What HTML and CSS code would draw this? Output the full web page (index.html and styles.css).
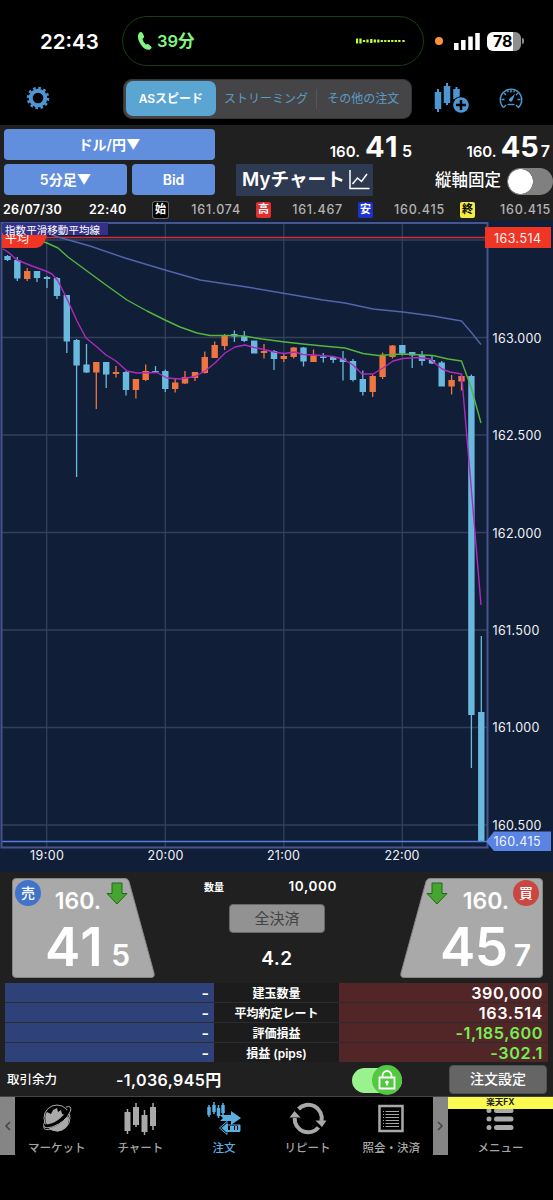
FILE: index.html
```
<!DOCTYPE html>
<html lang="ja">
    <head>
        <meta charset="utf-8">
        <meta name="viewport" content="width=device-width, initial-scale=1.0">
        <title>ドル/円 注文</title>
        <link rel="stylesheet" href="styles.css">
    </head>
    <body>
        <!-- phone status bar -->
        <div class="status-bar">
            <span class="clock">22:43</span>
            <div class="call-pill">
                <svg class="phone" width="16" height="20" viewBox="0 0 16 20"><path d="M2 2Q4 0 5.500 2L7 5Q7.500 6.500 5.500 8Q6 11 9 13.500Q10.500 12.500 12 13.500L14.500 16Q15 17.500 13 18.500Q9 20 4.500 14.500Q-1 7 2 2Z"/></svg>
                <span class="call-time">39分</span>
                <svg class="wave" width="50" height="6" viewBox="0 0 50 6"><path d="M1 .5v5M4.500 .5v5"/><path d="M8 2v2M11.500 1.500v3M15.300 1v4M18.800 1.500v3M22.300 1.500v3M25.800 2v2M29.300 2v2M32.800 2v2M36.300 2v2M39.800 2v2M43.300 2v2M47.500 2v2"/></svg>
            </div>
            <span class="mic-dot"></span>
            <svg class="signal" width="27" height="17" viewBox="0 0 27 17"><path d="M2.300 17v-7M9.300 17v-10M16.500 17v-13.500M23.500 17v-17"/></svg>
            <div class="battery">78</div>
            <span class="battery-tip"></span>
        </div>

        <!-- order mode tabs -->
        <div class="nav">
            <svg class="gear" width="24" height="24" viewBox="-12 -12 24 24">
                <circle r="7.300" class="gear-ring"/>
                <circle r="10" class="gear-teeth"/>
            </svg>
            <div class="segments">
                <span class="segment active">ASスピード</span>
                <span class="segment">ストリーミング</span>
                <span class="segment last">その他の注文</span>
            </div>
            <svg class="add-chart" width="36" height="32" viewBox="0 0 36 32">
                <path class="wick" d="M4 6v23M13 0v22M22.500 4v10"/>
                <path class="candle" d="M4 9v17M13 3v17M22.500 6v10"/>
                <circle class="halo" cx="27" cy="22" r="8.800"/>
                <circle class="disc" cx="27" cy="22" r="7.800"/>
                <path class="plus" d="M27 17v10M22 22h10"/>
            </svg>
            <svg class="gauge" width="26" height="24" viewBox="0 0 26 24">
                <path d="M5.500 21.500A10.700 10.700 0 1 1 20.500 21.500L18 19M5.500 21.500L8 19"/>
                <path d="M13 3.500v3M6 7l2 2M20 7l-2 2M3.500 13.500h3M22.500 13.500h-3M9.500 4.500l.7 1.700M16.500 4.500l-.7 1.700"/>
                <path d="M9.500 18.500h7"/>
                <path class="needle" d="M17 8l-2.500 6.500a1.800 1.800 0 1 1-2.600-2.200z"/>
            </svg>
        </div>

        <!-- currency pair, bar length and rates -->
        <div class="toolbar">
            <div class="selectors">
                <button class="pair">ドル/円▼</button>
                <button class="term">5分足▼</button>
                <button class="side">Bid</button>
            </div>
            <div class="rates">
                <div class="rate-row">
                    <span class="rate bid">160.<b>41</b><i>5</i></span>
                    <span class="rate ask">160.<b>45</b><i>7</i></span>
                </div>
                <div class="option-row">
                    <div class="my-chart">Myチャート<svg width="21" height="21" viewBox="0 0 21 21"><path d="M1 1v18.500h19.500"/><path d="M3.500 15l5-6 4 3.500L18 5"/></svg></div>
                    <span class="fix-label">縦軸固定</span>
                    <span class="switch"></span>
                </div>
            </div>
        </div>

        <div class="ohlc">
            <span class="date">26/07/30</span>
            <span class="time">22:40</span>
            <span class="tag open">始</span>
            <span class="value">161.074</span>
            <span class="tag high">高</span>
            <span class="value">161.467</span>
            <span class="tag low">安</span>
            <span class="value">160.415</span>
            <span class="tag close">終</span>
            <span class="value last">160.415</span>
        </div>

        <svg class="chart" width="553" height="652" viewBox="0 220 553 652">
            <path class="grid" d="M46.700 223V847M165.300 223V847M283.800 223V847M402.300 223V847M2 240H487M2 337.500H487M2 435H487M2 532.500H487M2 630H487M2 727.500H487M2 825H487"/>
            <!-- average position price -->
            <path class="average" d="M2 237.500H487"/>
            <!-- moving averages -->
            <path class="ma long" d="M50 234L58 237L90 246L125 258L165 270L200 280L250 287.500L323 300L345 303L373 309L403 312L433 316L461.500 321L471 332L481 344.500"/>
            <!-- candles going down -->
            <path class="wick down" d="M7.500 255V261M17.300 257V281M37 271V282M47 276V288M57 277V299M66.800 295V353M76.600 339V477M86.500 344V373M106.200 362V388M126 371V395.500M155.500 366V373M165.300 369.500V392M234.400 330.500V342M244.300 331V342M274 350V370M303.500 347V366.500M323.300 353V362.500M333.200 356V363M343 351V380.500M353 359V381.500M362.800 370.500V395.500M402.300 345V355.500M412.200 352V368M422 351V365.500M432 356V364M441.700 361V386M471.400 374.500V768M481.300 636V841"/>
            <path class="body down" d="M7.500 256V260M17.300 260V278.500M37 271V278M47 277V279M57 278V296M66.800 295V341.500M76.600 340V365.500M86.500 364.500V372.500M106.200 362V374.500M126 372V390M155.500 371V372.500M165.300 371V389M234.400 334V336.500M244.300 336V341M254.200 340.500V353.500M274 351V359M303.500 347.500V361.500M323.300 356.500V358M333.200 357V360M343 358.500V362M353 361V380M362.800 379V392M402.300 345V353.500M412.200 352V355.500M422 355V361M432 360V363.500M441.700 362.500V386.500M471.400 376V715M481.300 712V841"/>
            <!-- candles going up -->
            <path class="wick up" d="M27.200 268V281M96.300 362V409M116 366V377.500M135.900 379V398.500M145.700 364.500V381M175.200 378V392.500M185 371V384M195 372V381M204.800 351.500V373.500M214.700 341.500V358M224.600 334V350M264 344V358.500M283.800 354V362M293.700 347V358.500M313.500 349.500V362M372.700 374.500V397M382.600 352.500V379M392.500 345V358.500M451.600 375V394.500M461.500 374V390.500"/>
            <path class="body up" d="M27.200 271V279M96.300 362V372.500M116 372V374M135.900 379V390M145.700 371V380M175.200 382.500V389M185 377V383.500M195 372V378M204.800 357V373M214.700 345V358M224.600 335V346M264 351V353M283.800 356V359M293.700 347.500V357M313.500 355.500V362M372.700 376V392M382.600 355.500V377M392.500 345.500V357M451.600 380V386.500M461.500 376V381.500"/>
            <path class="ma middle" d="M40 241L47 243L58 248L68 257L87 271L106 285L127 300L147 311L165 320L180 327L197 333L210 335.500L230 335.500L244 336L262 339L285 342L303 344L323 346L345 348L363 353.500L378 355.500L403 354L433 355.500L448 359L461.500 361L471 387L481 423"/>
            <path class="ma short" d="M3 249L8 252L17 260L32 266L47 271.500L52 274L58 281L68 301L77 321L86 338L97 347L106 355L116 361L127 371L137 373L157 372.500L167 378L180 379L195 376.500L205 371L215 363L225 353L235 347L245 345L254 347.500L264 349.500L274 352L284 353.500L295 352L303 354.500L315 355L333 356.500L343 359L353 365L362 374L373 374L383 368L393 361L403 358.500L418 357.500L430 359L442 369L450 372L461.500 374L471 485L481 605"/>
            <path class="current" d="M2 841.500H488"/>
            <path class="frame" d="M1.500 847.500V223H487.500V847.500Z"/>
            <path class="average-tag" d="M2 233H47Q45 248 35 248H2Z"/>
            <text class="average-text" x="5" y="243">平均</text>
            <rect class="title-tag" x="3" y="223" width="105" height="12"/>
            <text class="title-text" x="5" y="233.500" textLength="95">指数平滑移動平均線</text>
            <rect class="average-price" x="485" y="227" width="66" height="21"/>
            <g class="axis">
                <text x="494" y="242.500" textLength="47">163.514</text>
                <text x="492.500" y="342.500" textLength="49">163.000</text>
                <text x="492.500" y="440" textLength="49">162.500</text>
                <text x="492.500" y="537.500" textLength="49">162.000</text>
                <text x="492.500" y="634.500" textLength="47">161.500</text>
                <text x="492.500" y="732" textLength="47">161.000</text>
                <text x="492.500" y="829.500" textLength="49">160.500</text>
            </g>
            <path class="current-tag" d="M486 841.500L494 831.500H551V851H494Z"/>
            <g class="axis">
                <text x="493.500" y="846" textLength="47">160.415</text>
                <text x="30" y="859.500" textLength="34">19:00</text>
                <text x="147.500" y="859.500" textLength="36">20:00</text>
                <text x="267" y="859.500" textLength="33">21:00</text>
                <text x="384.500" y="859.500" textLength="35">22:00</text>
            </g>
        </svg>

        <!-- one touch order buttons -->
        <div class="order">
            <div class="price-button sell">
                <svg class="plate" width="143" height="100" viewBox="0 0 143 100"><path d="M4 .5H113Q116 .5 117 3.500L142 95Q143 99.500 139 99.500H4Q.5 99.500 .5 96V4Q.5 .5 4 .5Z"/></svg>
                <span class="badge">売</span>
                <span class="big-figure">160.</span>
                <svg class="arrow" width="22" height="23" viewBox="0 0 22 23"><path d="M6 1H16V11.500H21L11 22L1 11.500H6Z"/></svg>
                <div class="pips">41<small>5</small></div>
            </div>
            <div class="quantity">
                <div class="amount"><span>数量</span><b>10,000</b></div>
                <button class="close-all">全決済</button>
                <div class="spread">4.2</div>
            </div>
            <div class="price-button buy">
                <svg class="plate" width="143" height="100" viewBox="0 0 143 100"><path d="M139 .5H30Q27 .5 26 3.500L1 95Q0 99.500 4 99.500H139Q142.500 99.500 142.500 96V4Q142.500 .5 139 .5Z"/></svg>
                <svg class="arrow" width="22" height="23" viewBox="0 0 22 23"><path d="M6 1H16V11.500H21L11 22L1 11.500H6Z"/></svg>
                <span class="big-figure">160.</span>
                <span class="badge">買</span>
                <div class="pips">45<small>7</small></div>
            </div>
        </div>

        <!-- open positions -->
        <div class="positions">
            <span class="short">-</span><span class="name">建玉数量</span><span class="long">390,000</span>
            <span class="short">-</span><span class="name">平均約定レート</span><span class="long">163.514</span>
            <span class="short">-</span><span class="name">評価損益</span><span class="long loss">-1,185,600</span>
            <span class="short">-</span><span class="name">損益 (pips)</span><span class="long loss">-302.1</span>
        </div>

        <div class="balance">
            <span class="balance-label">取引余力</span>
            <span class="balance-value">-1,036,945円</span>
            <div class="lock">
                <svg width="30" height="30" viewBox="0 0 30 30"><circle cx="15" cy="15" r="15"/><path d="M7.500 12.500H22.500V23.500H7.500ZM10.500 12.500V10.500A4.500 4.500 0 0 1 19.500 10.500V12.500M15 18V20.500"/><circle class="key" cx="15" cy="17.300" r="1.700"/></svg>
            </div>
            <button class="order-setting">注文設定</button>
        </div>

        <!-- bottom tabs -->
        <div class="tabs">
            <span class="scroll"><svg width="8" height="10" viewBox="0 0 8 10"><path d="M6 1L2 5L6 9"/></svg></span>
            <div class="tab">
                <svg width="34" height="34" viewBox="0 0 34 34">
                    <circle class="line" cx="17" cy="16" r="13"/>
                    <path class="fill" d="M6 21Q4 13 7 10L11 12L13 8L17 6L18 10L21 8L22 12L26 13L29 17Q29 27 18 29.500Q9 29 6 21Z"/>
                    <path class="cut" d="M4 24.500Q19 25 30.500 7"/>
                    <path class="line" d="M5 19Q0 28 12 25Q26 20 30.500 9Q32 3 26 5M4 24Q2 30 15 26.500Q26 22 30 13"/>
                </svg>
                <span>マーケット</span>
            </div>
            <div class="tab">
                <svg width="34" height="34" viewBox="0 0 34 34"><path class="thin" d="M4.500 7V32M13 1V25M21.500 8V33M30 1V28"/><path class="thick" d="M4.500 10V29M13 5V23M21.500 13V30M30 5V24"/></svg>
                <span>チャート</span>
            </div>
            <div class="tab selected">
                <svg width="36" height="34" viewBox="0 0 36 34"><path class="thin" d="M3 3V15M8 0V12M12.500 3V16M17 1V13"/><path class="mid" d="M3 5V13M8 3V10M12.500 6V14M17 3V11"/><path class="fill" d="M14 13H25V9L35 16L25 23V19H14L17 16Z"/><path class="line" d="M21 29H34V23H21V19.500L13.500 26L21 32.500Z"/><path class="fill" d="M20 22L15.500 26L20 30H34V23H32V28H31V24H29V28H28V24H24V28H22V22Z"/></svg>
                <span>注文</span>
            </div>
            <div class="tab">
                <svg width="36" height="34" viewBox="0 0 36 34"><path class="ring" d="M8.500 7A13.500 13.500 0 0 1 31.500 19M28.500 25.500A13.500 13.500 0 0 1 4.700 16"/><path class="fill" d="M25.500 18.500L36.500 18.500L32 25ZM-.5 15.500L10.500 15.500L4.500 9Z"/></svg>
                <span>リピート</span>
            </div>
            <div class="tab">
                <svg width="28" height="34" viewBox="0 0 28 34"><path class="sheet" d="M2.500 4H25.500V29H2.500Z"/><path class="line" d="M8.500 9.500H22M8.500 12.500H22M8.500 15.500H22M8.500 18.500H22M8.500 21.500H22M8.500 24.500H22M6 9.500h1M6 12.500h1M6 15.500h1M6 18.500h1M6 21.500h1M6 24.500h1"/></svg>
                <span>照会・決済</span>
            </div>
            <span class="scroll"><svg width="8" height="10" viewBox="0 0 8 10"><path d="M2 1L6 5L2 9"/></svg></span>
            <div class="tab menu">
                <em>楽天FX</em>
                <svg width="28" height="34" viewBox="0 0 28 34"><path class="list" d="M10.500 8.500H25M10.500 17H25M10.500 25.500H25M3 8.500h0M3 17h0M3 25.500h0"/></svg>
                <span>メニュー</span>
            </div>
        </div>
    </body>
</html>
```

FILE: styles.css
```
*{
    box-sizing: border-box;
}
body{
    margin: 0;
    width: 553px;
    height: 1200px;
    overflow: hidden;
    background-color: black;
    color: white;
    font-family: Inter, "Noto Sans CJK JP", sans-serif;
}
svg{
    display: block;
    flex-shrink: 0;
    fill: none;
}
span, b{
    white-space: nowrap;
}
button{
    margin: 0;
    padding: 0;
    border: 0;
    color: white;
    font-family: inherit;
}

/* status bar */
.status-bar{
    display: flex;
    align-items: center;
    height: 74px;
    padding: 8px 0 0 40px;
}
.clock{
    width: 82px;
    font-size: 20.500px;
    font-weight: 600;
}
.call-pill{
    display: flex;
    align-items: center;
    width: 302px;
    height: 50px;
    padding: 0 17px 0 14px;
    border: 1.5px solid #173f14;
    border-radius: 25px;
    color: #80f580;
}
.phone{
    fill: #80f580;
}
.call-time{
    margin-left: 4px;
    font-size: 16.500px;
    font-weight: 600;
    line-height: 20px;
}
.wave{
    margin-left: auto;
    stroke: #bcff3b;
    stroke-width: 2.300;
}
.mic-dot{
    width: 8px;
    height: 8px;
    margin-left: 11px;
    border-radius: 50%;
    background-color: #ff9240;
}
.signal{
    margin-left: 11px;
    stroke: white;
    stroke-width: 4.500;
}
.battery{
    width: 34px;
    height: 19px;
    margin-left: 6px;
    padding-left: 6px;
    border-radius: 6px;
    background: linear-gradient(90deg, white 77%, #8e8e8e 77%);
    color: black;
    font-size: 16px;
    font-weight: 700;
    line-height: 19px;
}
.battery-tip{
    width: 2px;
    height: 6px;
    margin-left: 1px;
    border-radius: 0 2px 2px 0;
    background-color: #8e8e8e;
}

/* order mode tabs */
.nav{
    display: flex;
    align-items: center;
    height: 51px;
    padding: 0 29px 2px 26px;
}
.gear{
    margin-top: -1px;
}
.gear-ring{
    stroke: #4e96d2;
    stroke-width: 4;
}
.gear-teeth{
    stroke: #4e96d2;
    stroke-width: 2.500;
    stroke-dasharray: 2.620 2.616;
}
.segments{
    display: flex;
    align-items: center;
    width: 289px;
    height: 40px;
    margin-left: 73px;
    padding: 2px;
    border: 1px solid #353535;
    border-radius: 9px;
    background-color: #454548;
    color: #5b9cc5;
    font-size: 12px;
}
.segment{
    width: 102px;
    line-height: 20px;
    text-align: center;
}
.segment.active{
    width: 91px;
    border-radius: 7px;
    background-color: #5aa5d2;
    color: white;
    font-weight: 600;
    line-height: 35px;
}
.segment.last{
    width: 94px;
    border-left: 1px solid #55555a;
}
.add-chart{
    margin-left: 22px;
}
.add-chart .wick{
    stroke: #4e96d2;
    stroke-width: 2;
}
.add-chart .candle{
    stroke: #4e96d2;
    stroke-width: 6.500;
}
.add-chart .halo{
    fill: black;
}
.add-chart .disc{
    fill: #4e96d2;
}
.add-chart .plus{
    stroke: black;
    stroke-width: 2.500;
}
.gauge{
    margin: -2px 0 0 auto;
    stroke: #4c9bd0;
    stroke-width: 1.400;
}
.gauge .needle{
    fill: #4c9bd0;
    stroke: none;
}

/* toolbar */
.toolbar{
    display: flex;
    height: 75px;
    padding: 4px 0 0 4px;
    background-color: #202020;
}
.selectors{
    display: grid;
    grid-template-columns: 123px 83px;
    grid-template-rows: 31px 31px;
    gap: 4px 5px;
    width: 211px;
}
.selectors button{
    border-radius: 4px;
    background-color: #628fdd;
    font-size: 14px;
    font-weight: 600;
    line-height: 29px;
}
.selectors .pair{
    grid-column: 1 / 3;
}
.rates{
    width: 338px;
}
.rate-row{
    display: flex;
    justify-content: flex-end;
    height: 34px;
    line-height: 35px;
}
.rate{
    width: 138px;
    padding-right: 3px;
    text-align: right;
    font-size: 15px;
    font-weight: 600;
}
.rate b{
    margin-left: 4px;
    font-size: 29px;
    font-weight: 700;
}
.rate.bid b{
    margin-left: 5px;
    letter-spacing: 1.500px;
}
.rate i{
    margin-left: 2px;
    font-size: 16px;
    font-style: normal;
}
.rate.bid i{
    margin-left: 3px;
}
.option-row{
    display: flex;
    align-items: center;
    height: 33px;
    overflow: hidden;
}
.my-chart{
    display: flex;
    align-items: center;
    width: 138px;
    height: 32px;
    margin-left: 21px;
    padding-left: 6px;
    background-color: #2e3952;
    font-size: 18.700px;
    font-weight: 600;
    line-height: 30px;
    white-space: nowrap;
}
.my-chart svg{
    margin-left: 4px;
    stroke: white;
    stroke-width: 1.500;
}
.fix-label{
    margin-left: 62px;
    font-size: 16.500px;
    font-weight: 500;
    line-height: 30px;
}
.switch{
    flex-shrink: 0;
    width: 46px;
    height: 27px;
    margin: 4px 0 0 6px;
    border-radius: 14px;
    background: radial-gradient(circle at 13.500px 13.500px, white 12px, transparent 12.500px), #808080;
}

/* open high low close */
.ohlc{
    display: grid;
    grid-template-columns: 86px 64px 17px 86px 17px 85px 17px 85px 17px 1fr;
    align-items: center;
    height: 20px;
    padding: 0 2px 0 3px;
    background-color: #202020;
    font-size: 12.500px;
    font-weight: 600;
    line-height: 18px;
    letter-spacing: .3px;
}
.ohlc .value{
    padding-right: 15px;
    color: #b4b4b4;
    font-weight: 500;
    letter-spacing: .8px;
    text-align: right;
}
.ohlc .last{
    padding-right: 0;
}
.tag{
    width: 15px;
    height: 16px;
    border-radius: 2px;
    font-size: 11px;
    line-height: 15px;
    letter-spacing: 0;
    text-align: center;
}
.open{ background-color: black; box-shadow: 0 0 0 1px #666; }
.high{ background-color: #dc3030; }
.low{ background-color: #1c31d0; }
.close{ background-color: #f4ec42; color: black; }

/* chart */
.chart{
    background-color: #111e38;
}
.grid{
    stroke: #34405a;
    stroke-width: 1.300;
}
.average{
    stroke: #d03035;
    stroke-width: 1.700;
}
.ma{
    stroke-width: 1.400;
    stroke-linejoin: round;
}
.ma.long{ stroke: #4f66ac; }
.ma.middle{ stroke: #54b63c; }
.ma.short{ stroke: #b129bd; }
.chart .wick{
    stroke-width: 1.300;
}
.chart .body{
    stroke-width: 6.400;
}
.chart .down{ stroke: #68b9dd; }
.chart .up{ stroke: #ee7440; }
.current{
    stroke: #527ddb;
    stroke-width: 1.500;
}
.frame{
    stroke: #46558c;
    stroke-width: 2;
}
.average-tag, .average-price{
    fill: #f13524;
}
.title-tag{
    fill: #343087;
}
.title-text{
    fill: white;
    font-size: 10.500px;
}
.average-text{
    fill: white;
    font-size: 12px;
}
.current-tag{
    fill: #5984e4;
}
.axis{
    fill: #f0f2f7;
    font-size: 12.500px;
}

/* order buttons */
.order{
    display: flex;
    height: 111px;
    padding: 6px 10px 0 12px;
    background-color: #202020;
}
.price-button{
    display: grid;
    grid-template-columns: 31px 64px 48px;
    grid-template-rows: 39px 61px;
    width: 143px;
    height: 100px;
}
.buy{
    grid-template-columns: 26px 86px 31px;
    margin-left: auto;
}
.plate{
    grid-area: 1 / 1 / 3 / 4;
    fill: #a9a9a9;
    stroke: #858585;
}
.badge{
    grid-row: 1;
    grid-column: 1;
    width: 26px;
    height: 26px;
    margin: 2px 0 0 3px;
    border-radius: 50%;
    background-color: #4073c9;
    font-size: 14px;
    font-weight: 500;
    line-height: 25px;
    text-align: center;
}
.buy .badge{
    grid-column: 3;
    margin-left: 1px;
    background-color: #c94740;
}
.big-figure{
    grid-row: 1;
    grid-column: 2;
    padding: 8px 6px 0 0;
    text-align: right;
    font-size: 23px;
    font-weight: 600;
    line-height: 30px;
}
.buy .big-figure{
    padding-right: 3px;
}
.arrow{
    grid-row: 1;
    grid-column: 3;
    margin: 4px 0 0 -1px;
    fill: #46a52f;
    stroke: #1d6a16;
}
.buy .arrow{
    grid-column: 1;
    margin-left: 26px;
}
.pips{
    grid-area: 2 / 1 / 3 / 4;
    padding-right: 25px;
    text-align: right;
    font-size: 53px;
    font-weight: 600;
    line-height: 61px;
    letter-spacing: -.500px;
}
.sell .pips{
    letter-spacing: 1.500px;
}
.pips small{
    margin-left: 7px;
    font-size: 30px;
    letter-spacing: 0;
}
.buy .pips{
    padding-right: 12px;
}
.buy small{
    margin-left: 6px;
}
.quantity{
    width: 160px;
    margin-left: 33px;
}
.amount{
    display: flex;
    justify-content: space-between;
    align-items: center;
    height: 16px;
    padding: 0 11px 0 16px;
    font-size: 13.500px;
}
.amount b{
    font-weight: 600;
    letter-spacing: .6px;
}
.amount span{
    font-size: 10px;
    font-weight: 700;
}
.close-all{
    display: block;
    width: 96px;
    height: 29px;
    margin: 10px 0 0 41px;
    border: 1px solid #686868;
    border-radius: 4px;
    background-color: #929292;
    color: #444;
    font-size: 15px;
    line-height: 26px;
}
.spread{
    margin-top: 13px;
    padding-left: 18px;
    font-size: 19px;
    font-weight: 600;
    line-height: 25px;
    letter-spacing: .5px;
    text-align: center;
}

/* open positions */
.positions{
    display: grid;
    grid-template-columns: 209px 125px 209px;
    grid-template-rows: repeat(4, 19px);
    gap: 1px 0;
    padding: 0 5px 2px;
    background-color: #2c2c30;
    box-shadow: inset 5px 0 #202020, inset -5px 0 #202020, inset 0 -2px #202020;
    font-weight: 600;
    line-height: 21px;
    text-align: right;
}
.positions .short{
    padding-right: 5px;
    background-color: #2f4179;
    font-size: 16px;
}
.positions .name{
    background-color: #1c1c1c;
    font-size: 12px;
    text-align: center;
}
.positions .long{
    padding-right: 5px;
    background-color: #522526;
    font-size: 16.200px;
    letter-spacing: .6px;
}
.positions .loss{
    color: #75ee55;
}
.balance{
    display: flex;
    align-items: center;
    height: 32px;
    padding: 0 6px 0 7px;
    background-color: #202020;
}
.balance-label{
    width: 109px;
    font-size: 12.500px;
    font-weight: 500;
    line-height: 16px;
}
.balance-value{
    font-size: 16px;
    font-weight: 600;
    line-height: 20px;
    letter-spacing: .4px;
}
.lock{
    width: 50px;
    height: 25px;
    margin-left: auto;
    border-radius: 13px;
    background-color: #99f28e;
}
.lock svg{
    margin: -3px 0 0 20px;
    fill: #54c743;
}
.lock path{
    stroke: white;
    stroke-width: 1.800;
}
.lock .key{
    fill: white;
}
.order-setting{
    width: 98px;
    height: 29px;
    margin: 0 0 2px 47px;
    border: 1px solid #505050;
    border-radius: 4px;
    background-color: #656565;
    font-size: 14px;
    font-weight: 500;
    line-height: 26px;
}

/* bottom tabs */
.tabs{
    display: grid;
    grid-template-columns: 15px repeat(5, 83.600px) 15px 105px;
    grid-template-rows: 58px;
    height: 59px;
    border-top: 1px solid #444;
}
.scroll{
    display: flex;
    align-items: center;
    justify-content: center;
    background-color: #858585;
}
.scroll path{
    stroke: #444;
    stroke-width: 1.500;
}
.tab{
    display: flex;
    flex-direction: column;
    align-items: center;
    padding-top: 5px;
    color: #a5a5a5;
    font-size: 11.500px;
    font-weight: 500;
}
.tab span{
    margin-top: 2px;
    line-height: 20px;
}
.tab svg{
    overflow: visible;
    stroke: #a9a9a9;
}
.tab.selected{
    color: #5aaee0;
}
.tab.selected svg{
    stroke: #5aaee0;
}
.tab .fill{
    fill: #a9a9a9;
    stroke: none;
}
.tab.selected .fill{
    fill: #5aaee0;
}
.tab .cut{
    stroke: black;
    stroke-width: 4;
}
.tab .thin{ stroke-width: 1.500; }
.tab .thick{ stroke-width: 6; }
.tab .mid{ stroke-width: 3.500; }
.tab .ring{ stroke-width: 4; }
.tab .sheet{ stroke-width: 2.500; }
.tab .list{
    stroke-width: 5;
    stroke-linecap: round;
}
.tab.menu{
    padding-top: 0;
}
.menu em{
    z-index: 1;
    flex-shrink: 0;
    width: 105px;
    height: 12px;
    margin-bottom: -7px;
    background-color: #fafa50;
    color: #222;
    font-size: 8.500px;
    font-style: normal;
    font-weight: 700;
    line-height: 11px;
    text-align: center;
}
```
